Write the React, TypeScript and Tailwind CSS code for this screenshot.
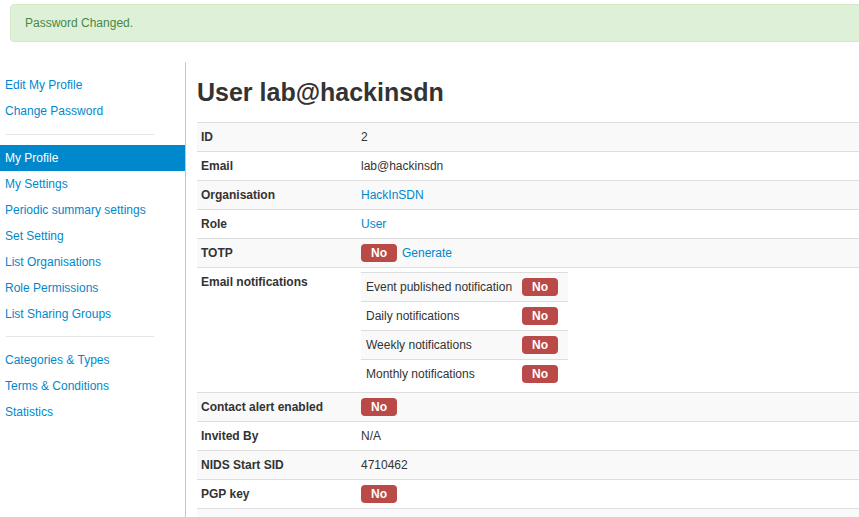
import React from "react";

const sideTop = ["Edit My Profile", "Change Password"];
const sideMid = [
  "My Profile",
  "My Settings",
  "Periodic summary settings",
  "Set Setting",
  "List Organisations",
  "Role Permissions",
  "List Sharing Groups",
];
const sideBot = ["Categories & Types", "Terms & Conditions", "Statistics"];

function Badge() {
  return (
    <span className="inline-block rounded-[4px] bg-[#b94a48] px-[10px] text-[12px] font-bold leading-[18px] text-white">
      No
    </span>
  );
}

function SideItem({ label, active }: { label: string; active?: boolean }) {
  return (
    <div
      className={
        "h-[26px] pl-[5px] leading-[26px] " +
        (active ? "bg-[#0088cc] text-white" : "text-[#0088cc]")
      }
    >
      {label}
    </div>
  );
}

type Row = { label: string; value: React.ReactNode; top?: boolean };

export default function App() {
  const notifs = [
    "Event published notification",
    "Daily notifications",
    "Weekly notifications",
    "Monthly notifications",
  ];
  const rows: Row[] = [
    { label: "ID", value: "2" },
    { label: "Email", value: "lab@hackinsdn" },
    { label: "Organisation", value: <span className="text-[#0088cc]">HackInSDN</span> },
    { label: "Role", value: <span className="text-[#0088cc]">User</span> },
    {
      label: "TOTP",
      value: (
        <span className="flex items-center">
          <Badge />
          <span className="ml-[5px] text-[#0088cc]">Generate</span>
        </span>
      ),
    },
    {
      label: "Email notifications",
      top: true,
      value: (
        <div className="w-[207px]">
          {notifs.map((n, i) => (
            <div
              key={n}
              className={
                "flex h-[29px] items-center border-t border-[#dddddd] " +
                (i % 2 === 0 ? "bg-[#f9f9f9]" : "bg-white")
              }
            >
              <div className="w-[156px] pl-[5px]">{n}</div>
              <div className="pl-[5px]">
                <Badge />
              </div>
            </div>
          ))}
        </div>
      ),
    },
    { label: "Contact alert enabled", value: <Badge /> },
    { label: "Invited By", value: "N/A" },
    { label: "NIDS Start SID", value: "4710462" },
    { label: "PGP key", value: <Badge /> },
    { label: "", value: "" },
  ];

  return (
    <div
      className="h-[517px] w-full overflow-hidden bg-white text-[12px] leading-[20px] text-[#333333]"
      style={{ fontFamily: '"Liberation Sans", Arial, Helvetica, sans-serif' }}
    >
      <div className="ml-[10px] mt-[4px] w-[900px] rounded-[4px] border border-[#d6e9c6] bg-[#dff0d8] py-[8px] pl-[14px] text-[#468847]">
        Password Changed.
      </div>
      <div className="mt-[20px] flex">
        <div className="w-[186px] shrink-0 border-r border-[#c8c8c8] pb-[9px] pt-[10px]">
          {sideTop.map((s) => (
            <SideItem key={s} label={s} />
          ))}
          <div className="mb-[10px] ml-[6px] mt-[10px] h-px w-[148px] bg-[#e5e5e5]" />
          {sideMid.map((s) => (
            <SideItem key={s} label={s} active={s === "My Profile"} />
          ))}
          <div className="mb-[10px] ml-[6px] mt-[9px] h-px w-[148px] bg-[#e5e5e5]" />
          {sideBot.map((s) => (
            <SideItem key={s} label={s} />
          ))}
        </div>
        <div className="min-w-0 flex-1 pl-[11px]">
          <h2 className="my-[10px] text-[25px] font-bold leading-[40px] text-[#333333]">
            User lab@hackinsdn
          </h2>
          <div>
            {rows.map((r, i) => (
              <div
                key={i}
                className={
                  "flex min-h-[29px] border-t border-[#dddddd] " +
                  (r.top ? "items-start " : "items-center ") +
                  (i % 2 === 0 ? "bg-[#f9f9f9]" : "bg-white")
                }
              >
                <div className="w-[159px] shrink-0 py-[4px] pl-[4px] pr-[5px] font-bold">{r.label}</div>
                <div className="px-[5px] py-[4px]">{r.value}</div>
              </div>
            ))}
          </div>
        </div>
      </div>
    </div>
  );
}
